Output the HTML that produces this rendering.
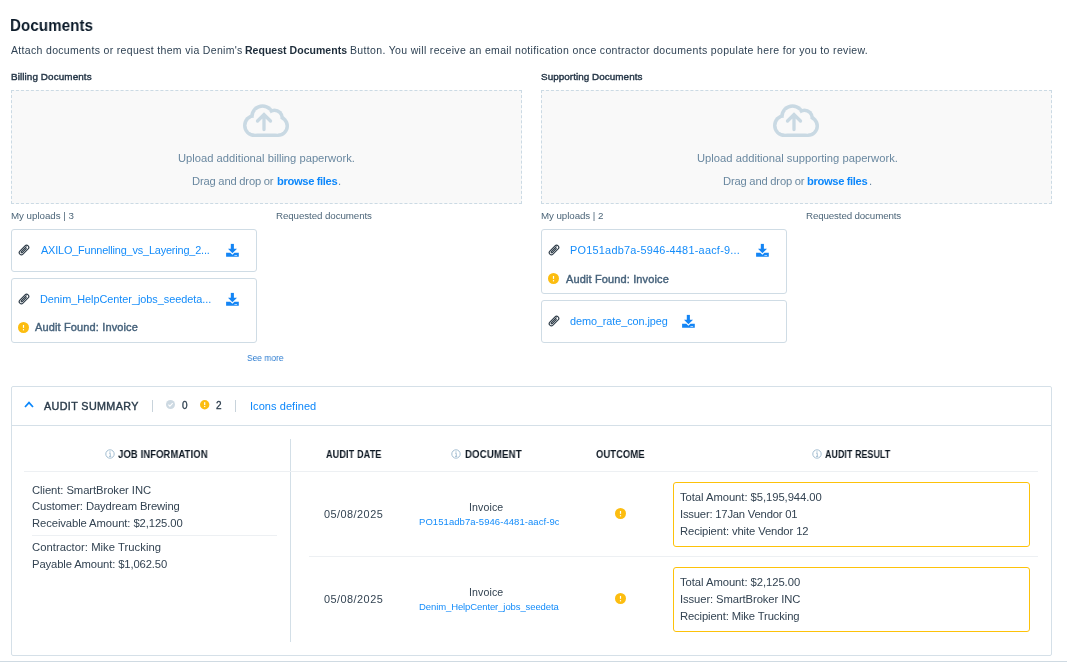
<!DOCTYPE html><html><head><meta charset="utf-8">
<style>
*{box-sizing:border-box;margin:0;padding:0}
html,body{width:1067px;height:662px;overflow:hidden;background:#fff}
body{position:relative;font-family:"Liberation Sans",sans-serif;color:#3b4d5c}
.a{position:absolute;white-space:nowrap;line-height:1;will-change:transform}
svg{position:absolute;overflow:visible}
#title{left:10px;top:17px;font-size:16.5px;font-weight:bold;color:#0b1a29}
.dsc{color:#2f4254}
#desc b{color:#1d2c3a}
.sec{font-size:9.3px;font-weight:bold;color:#243546;top:71px}
.drop{top:90px;width:511px;height:114px;background:#f9f9f9;border:1px dashed #cbdae4}
.up{font-size:11px;color:#6a88a0}
.link{color:#0c87fb;font-weight:bold}
.small{font-size:9.3px;color:#4d6679;top:211px}
.card{position:absolute;width:246px;border:1px solid #cfdce5;border-radius:3px;background:#fff}
.fname{font-size:10.5px;color:#148cfa}
.audit{font-size:10.5px;font-weight:bold;color:#45617a}
.hdr{font-size:9.7px;font-weight:bold;color:#0e1823}
.td{font-size:10.8px;color:#334352}
.hl{position:absolute;height:1px;background:#edf0f3}
.semi{font-weight:normal!important;-webkit-text-stroke:0.4px currentColor}
.semi2{font-weight:normal!important;-webkit-text-stroke:0.3px currentColor}
</style></head><body>
<div class="a" id="title" style="top: 17px; left: 10px; font-size: 16.5px; letter-spacing: 0.1px; transform-origin: 0px 0px; transform: scaleX(0.9147);">Documents</div>
<div class="a dsc" id="desc1" style="left: 11px; top: 45px; font-size: 10.5px; letter-spacing: 0.326px;">Attach documents or request them via Denim's</div>
<div class="a dsc" id="desc2" style="left: 245px; top: 45px; font-size: 10.5px; font-weight: bold; color: rgb(29, 44, 58); letter-spacing: 0.031px;">Request Documents</div>
<div class="a dsc" id="desc3" style="left: 349.5px; top: 45px; font-size: 10.5px; letter-spacing: 0.337px;">Button. You will receive an email notification once contractor documents populate here for you to review.</div>

<div class="a sec semi" id="sec1" style="top: 72px; left: 10.8px; font-size: 9.9px; letter-spacing: 0.097px;">Billing Documents</div>
<div class="a sec semi" id="sec2" style="top: 72px; left: 541px; font-size: 9.9px; letter-spacing: 0.052px;">Supporting Documents</div>

<div class="a drop" style="left:11px"></div>
<div class="a drop" style="left:541px"></div>
<svg id="cloud1" style="left:243px;top:104px" width="46" height="34" viewBox="0 0 46 34">
 <g fill="#c9d9e3"><circle cx="11.5" cy="21.5" r="11.5"></circle><circle cx="19.5" cy="12.5" r="12.25"></circle><circle cx="31.4" cy="14" r="9.6"></circle><circle cx="35" cy="22" r="11"></circle><rect x="11.5" y="21.5" width="23.5" height="11.5"></rect></g>
 <g fill="#f9f9f9"><circle cx="11.5" cy="21.5" r="8"></circle><circle cx="19.5" cy="12.5" r="8.75"></circle><circle cx="31.4" cy="14" r="6.1"></circle><circle cx="35" cy="22" r="7.5"></circle><rect x="11.5" y="13" width="23.5" height="16.5"></rect></g>
 <path d="M21 25.5 V10.5 M14.5 17 L21 10.5 L27.5 17" fill="none" stroke="#c9d9e3" stroke-width="3.3" stroke-linecap="round" stroke-linejoin="miter"></path>
</svg>
<svg id="cloud2" style="left:773px;top:104px" width="46" height="34" viewBox="0 0 46 34">
 <g fill="#c9d9e3"><circle cx="11.5" cy="21.5" r="11.5"></circle><circle cx="19.5" cy="12.5" r="12.25"></circle><circle cx="31.4" cy="14" r="9.6"></circle><circle cx="35" cy="22" r="11"></circle><rect x="11.5" y="21.5" width="23.5" height="11.5"></rect></g>
 <g fill="#f9f9f9"><circle cx="11.5" cy="21.5" r="8"></circle><circle cx="19.5" cy="12.5" r="8.75"></circle><circle cx="31.4" cy="14" r="6.1"></circle><circle cx="35" cy="22" r="7.5"></circle><rect x="11.5" y="13" width="23.5" height="16.5"></rect></g>
 <path d="M21 25.5 V10.5 M14.5 17 L21 10.5 L27.5 17" fill="none" stroke="#c9d9e3" stroke-width="3.3" stroke-linecap="round" stroke-linejoin="miter"></path>
</svg>
<div class="a up" id="up1" style="left: 178.4px; top: 153px; font-size: 11.2px; letter-spacing: 0.006px;">Upload additional billing paperwork.</div>
<div class="a up" id="dd1a" style="left: 192.4px; top: 176px; font-size: 11.2px; letter-spacing: -0.199px;">Drag and drop or</div>
<div class="a up link" id="dd1b" style="left: 277px; top: 176px; font-size: 11.2px; letter-spacing: -0.363px;">browse files</div>
<div class="a up" id="dd1c" style="left:338.3px;top:176px;font-size:11.2px">.</div>
<div class="a up" id="up2" style="left: 697px; top: 153px; font-size: 11.2px; letter-spacing: 0.017px;">Upload additional supporting paperwork.</div>
<div class="a up" id="dd2a" style="left: 722.6px; top: 176px; font-size: 11.2px; letter-spacing: -0.2px;">Drag and drop or</div>
<div class="a up link" id="dd2b" style="left: 807.2px; top: 176px; font-size: 11.2px; letter-spacing: -0.363px;">browse files</div>
<div class="a up" id="dd2c" style="left:868.5px;top:176px;font-size:11.2px">.</div>

<div class="a small" id="mu1" style="top: 211px; left: 10.8px; font-size: 9.75px; letter-spacing: -0.029px;">My uploads | 3</div>
<div class="a small" id="rd1" style="top: 211px; left: 275.8px; font-size: 9.75px; letter-spacing: -0.089px;">Requested documents</div>
<div class="a small" id="mu2" style="top: 211px; left: 540.8px; font-size: 9.75px; letter-spacing: -0.071px;">My uploads | 2</div>
<div class="a small" id="rd2" style="top: 211px; left: 806.3px; font-size: 9.75px; letter-spacing: -0.133px;">Requested documents</div>

<!-- billing cards -->
<div class="card" style="left:11px;top:229px;height:43px"></div>
<div class="card" style="left:11px;top:278px;height:65px"></div>
<div class="a fname" id="f1" style="left: 40.6px; top: 245px; font-size: 10.9px; letter-spacing: -0.175px;">AXILO_Funnelling_vs_Layering_2...</div>
<div class="a fname" id="f2" style="left: 39.6px; top: 294px; font-size: 10.9px; letter-spacing: -0.044px;">Denim_HelpCenter_jobs_seedeta...</div>
<div class="a audit semi" id="au1" style="left: 35.4px; top: 322px; font-size: 11px; letter-spacing: 0.136px;">Audit Found: Invoice</div>
<div class="a small" id="seemore" style="left: 247.4px; top: 353px; color: rgb(42, 123, 208); font-size: 9.5px; letter-spacing: 0.1px; transform-origin: 0px 0px; transform: scaleX(0.8717);">See more</div>

<!-- supporting cards -->
<div class="card" style="left:541px;top:229px;height:65px"></div>
<div class="card" style="left:541px;top:300px;height:43px"></div>
<div class="a fname" id="f3" style="left: 570px; top: 245px; font-size: 10.9px; letter-spacing: 0.241px;">PO151adb7a-5946-4481-aacf-9...</div>
<div class="a audit semi" id="au2" style="left: 565.8px; top: 274px; font-size: 11px; letter-spacing: 0.132px;">Audit Found: Invoice</div>
<div class="a fname" id="f4" style="left: 570px; top: 316px; font-size: 10.9px; letter-spacing: -0.094px;">demo_rate_con.jpeg</div>

<!-- audit summary -->
<div class="a" style="left:11px;top:386px;width:1041px;height:270px;border:1px solid #d5e0e8;border-radius:2px"></div>
<div class="a" style="left:12px;top:425px;width:1039px;height:1px;background:#d5e0e8"></div>
<svg style="left:23px;top:400px" width="12" height="9" viewBox="0 0 12 9"><path d="M2 7 L6 2.6 L10 7" fill="none" stroke="#0c87fb" stroke-width="1.7"/></svg>
<div class="a semi" id="as" style="left: 44px; top: 401px; font-size: 10.75px; font-weight: bold; color: rgb(42, 59, 74); letter-spacing: 0.382px;">AUDIT SUMMARY</div>
<div class="a" style="left:152px;top:400px;width:1px;height:12px;background:#c8d3db"></div>
<svg style="left:166px;top:400px" width="9" height="9" viewBox="0 0 9 9"><circle cx="4.5" cy="4.5" r="4.5" fill="#cdd9e2"/><path d="M2.4 4.6 L3.9 6.1 L6.7 3.1" fill="none" stroke="#fff" stroke-width="1.1"/></svg>
<div class="a semi2" id="c0" style="left:181.5px;top:401px;font-size:10px;font-weight:bold;color:#2c3e4e">0</div>
<svg style="left:200.2px;top:400.2px" width="9.4" height="9.4" viewBox="-4.7 -4.7 9.4 9.4"><circle r="4.7" fill="#fcbd10"/><rect x="-0.6" y="-2.5" width="1.2" height="2.9" fill="#fff"/><rect x="-0.6" y="1.3" width="1.2" height="1.1" fill="#fff"/></svg>
<div class="a semi2" id="c2" style="left:215.9px;top:401px;font-size:10px;font-weight:bold;color:#2c3e4e">2</div>
<div class="a" style="left:235px;top:400px;width:1px;height:12px;background:#c8d3db"></div>
<div class="a" id="icons" style="left: 250px; top: 401px; font-size: 11px; color: rgb(12, 135, 251); letter-spacing: 0.067px;">Icons defined</div>

<!-- table -->
<div class="a" style="left:290px;top:439px;width:1px;height:203px;background:#d3dfe7"></div>
<div class="hl" style="left:24px;top:471px;width:1014px"></div>
<div class="hl" style="left:32px;top:535px;width:245px"></div>
<div class="hl" style="left:309px;top:556px;width:729px"></div>

<div class="a hdr" id="h1" style="left: 118.2px; top: 450px; font-size: 10.4px; letter-spacing: 0.1px; transform-origin: 0px 0px; transform: scaleX(0.9122);">JOB INFORMATION</div>
<div class="a hdr" id="h2" style="left: 325.8px; top: 450px; font-size: 10.4px; letter-spacing: 0.1px; transform-origin: 0px 0px; transform: scaleX(0.8796);">AUDIT DATE</div>
<div class="a hdr" id="h3" style="left: 464.6px; top: 450px; font-size: 10.4px; letter-spacing: 0.1px; transform-origin: 0px 0px; transform: scaleX(0.9312);">DOCUMENT</div>
<div class="a hdr" id="h4" style="left: 595.6px; top: 450px; font-size: 10.4px; letter-spacing: 0.1px; transform-origin: 0px 0px; transform: scaleX(0.9038);">OUTCOME</div>
<div class="a hdr" id="h5" style="left: 824.8px; top: 450px; font-size: 10.4px; letter-spacing: 0.1px; transform-origin: 0px 0px; transform: scaleX(0.8519);">AUDIT RESULT</div>

<div class="a td" id="j1" style="left: 32.4px; top: 485px; font-size: 11.25px; letter-spacing: -0.072px;">Client: SmartBroker INC</div>
<div class="a td" id="j2" style="left: 32.4px; top: 501px; font-size: 11.25px; letter-spacing: -0.112px;">Customer: Daydream Brewing</div>
<div class="a td" id="j3" style="left: 32.4px; top: 518px; font-size: 11.25px; letter-spacing: -0.095px;">Receivable Amount: $2,125.00</div>
<div class="a td" id="j4" style="left: 32.4px; top: 542px; font-size: 11.25px; letter-spacing: 0.033px;">Contractor: Mike Trucking</div>
<div class="a td" id="j5" style="left: 32.4px; top: 559px; font-size: 11.25px; letter-spacing: -0.125px;">Payable Amount: $1,062.50</div>

<div class="a td" id="d1" style="left: 323.8px; top: 509px; font-size: 10.9px; letter-spacing: 0.467px;">05/08/2025</div>
<div class="a td" id="d2" style="left: 323.8px; top: 594px; font-size: 10.9px; letter-spacing: 0.467px;">05/08/2025</div>
<div class="a td" id="i1" style="left: 469.4px; top: 502px; font-size: 10.6px; letter-spacing: 0.1px;">Invoice</div>
<div class="a td" id="i2" style="left: 469.4px; top: 587px; font-size: 10.6px; letter-spacing: 0.1px;">Invoice</div>
<div class="a" id="l1" style="left: 419.4px; top: 517px; width: 139.5px; overflow: hidden; font-size: 9.5px; color: rgb(20, 140, 250); letter-spacing: 0.06px;">PO151adb7a-5946-4481-aacf-9c0</div>
<div class="a" id="l2" style="left: 419.4px; top: 602px; width: 139.5px; overflow: hidden; font-size: 9.5px; color: rgb(20, 140, 250); letter-spacing: -0.1px;">Denim_HelpCenter_jobs_seedetails</div>

<div class="a" style="left:673px;top:482px;width:357px;height:65px;border:1px solid #fdc20a;border-radius:3px"></div>
<div class="a" style="left:673px;top:567px;width:357px;height:65px;border:1px solid #fdc20a;border-radius:3px"></div>
<div class="a td" id="r1" style="left: 680.1px; top: 492px; font-size: 11.25px; letter-spacing: -0.055px;">Total Amount: $5,195,944.00</div>
<div class="a td" id="r2" style="left: 680.1px; top: 509px; font-size: 11.25px; letter-spacing: -0.201px;">Issuer: 17Jan Vendor 01</div>
<div class="a td" id="r3" style="left: 680.1px; top: 526px; font-size: 11.25px; letter-spacing: -0.112px;">Recipient: vhite Vendor 12</div>
<div class="a td" id="r4" style="left: 680.1px; top: 577px; font-size: 11.25px; letter-spacing: -0.054px;">Total Amount: $2,125.00</div>
<div class="a td" id="r5" style="left: 680.1px; top: 594px; font-size: 11.25px; letter-spacing: -0.1px;">Issuer: SmartBroker INC</div>
<div class="a td" id="r6" style="left: 680.1px; top: 611px; font-size: 11.25px; letter-spacing: -0.131px;">Recipient: Mike Trucking</div>

<div class="a" style="left:0;top:661px;width:1067px;height:1px;background:#cfdae2"></div>


<!-- icons -->
<svg style="left:16.5px;top:243.4px" width="14" height="14" viewBox="-7 -7 14 14"><g transform="rotate(-45)" fill="none" stroke="#2f3d49" stroke-width="1.1" stroke-linecap="round"><path d="M3.3 2.2 H-3.65 A2.2 2.2 0 0 1 -3.65 -2.2 H3.65 A2.2 2.2 0 0 1 3.65 2.2"/><path d="M3.9 -0.7 H-3.1 A0.7 0.7 0 0 0 -3.1 0.7 H2.6"/></g></svg>
<svg style="left:16.5px;top:292.4px" width="14" height="14" viewBox="-7 -7 14 14"><g transform="rotate(-45)" fill="none" stroke="#2f3d49" stroke-width="1.1" stroke-linecap="round"><path d="M3.3 2.2 H-3.65 A2.2 2.2 0 0 1 -3.65 -2.2 H3.65 A2.2 2.2 0 0 1 3.65 2.2"/><path d="M3.9 -0.7 H-3.1 A0.7 0.7 0 0 0 -3.1 0.7 H2.6"/></g></svg>
<svg style="left:546.5px;top:243.4px" width="14" height="14" viewBox="-7 -7 14 14"><g transform="rotate(-45)" fill="none" stroke="#2f3d49" stroke-width="1.1" stroke-linecap="round"><path d="M3.3 2.2 H-3.65 A2.2 2.2 0 0 1 -3.65 -2.2 H3.65 A2.2 2.2 0 0 1 3.65 2.2"/><path d="M3.9 -0.7 H-3.1 A0.7 0.7 0 0 0 -3.1 0.7 H2.6"/></g></svg>
<svg style="left:546.5px;top:314.4px" width="14" height="14" viewBox="-7 -7 14 14"><g transform="rotate(-45)" fill="none" stroke="#2f3d49" stroke-width="1.1" stroke-linecap="round"><path d="M3.3 2.2 H-3.65 A2.2 2.2 0 0 1 -3.65 -2.2 H3.65 A2.2 2.2 0 0 1 3.65 2.2"/><path d="M3.9 -0.7 H-3.1 A0.7 0.7 0 0 0 -3.1 0.7 H2.6"/></g></svg>
<svg style="left:225px;top:243px" width="14" height="14" viewBox="0 0 14 14"><g fill="#1485f5"><rect x="5.8" y="0.9" width="3.1" height="5.5"/><polygon points="3,5.8 12,5.8 7.4,10.2"/><path d="M1.1 9.7 H5.3 L7.4 11.8 L9.5 9.7 H13.8 V13.8 H1.1 Z"/></g><rect x="9.4" y="12.1" width="2.7" height="0.8" fill="#cfe5fb"/></svg>
<svg style="left:225px;top:292px" width="14" height="14" viewBox="0 0 14 14"><g fill="#1485f5"><rect x="5.8" y="0.9" width="3.1" height="5.5"/><polygon points="3,5.8 12,5.8 7.4,10.2"/><path d="M1.1 9.7 H5.3 L7.4 11.8 L9.5 9.7 H13.8 V13.8 H1.1 Z"/></g><rect x="9.4" y="12.1" width="2.7" height="0.8" fill="#cfe5fb"/></svg>
<svg style="left:755px;top:243px" width="14" height="14" viewBox="0 0 14 14"><g fill="#1485f5"><rect x="5.8" y="0.9" width="3.1" height="5.5"/><polygon points="3,5.8 12,5.8 7.4,10.2"/><path d="M1.1 9.7 H5.3 L7.4 11.8 L9.5 9.7 H13.8 V13.8 H1.1 Z"/></g><rect x="9.4" y="12.1" width="2.7" height="0.8" fill="#cfe5fb"/></svg>
<svg style="left:681px;top:314px" width="14" height="14" viewBox="0 0 14 14"><g fill="#1485f5"><rect x="5.8" y="0.9" width="3.1" height="5.5"/><polygon points="3,5.8 12,5.8 7.4,10.2"/><path d="M1.1 9.7 H5.3 L7.4 11.8 L9.5 9.7 H13.8 V13.8 H1.1 Z"/></g><rect x="9.4" y="12.1" width="2.7" height="0.8" fill="#cfe5fb"/></svg>
<svg style="left:18.0px;top:322.0px" width="11.0" height="11.0" viewBox="-5.5 -5.5 11.0 11.0"><circle r="5.5" fill="#fcbd10"/><rect x="-0.6" y="-2.53" width="1.2" height="2.86" fill="#fff"/><rect x="-0.6" y="1.65" width="1.2" height="1.20" fill="#fff"/></svg>
<svg style="left:548.0px;top:273.0px" width="11.0" height="11.0" viewBox="-5.5 -5.5 11.0 11.0"><circle r="5.5" fill="#fcbd10"/><rect x="-0.6" y="-2.53" width="1.2" height="2.86" fill="#fff"/><rect x="-0.6" y="1.65" width="1.2" height="1.20" fill="#fff"/></svg>
<svg style="left:615.0px;top:507.9px" width="11.0" height="11.0" viewBox="-5.5 -5.5 11.0 11.0"><circle r="5.5" fill="#fcbd10"/><rect x="-0.6" y="-2.53" width="1.2" height="2.86" fill="#fff"/><rect x="-0.6" y="1.65" width="1.2" height="1.20" fill="#fff"/></svg>
<svg style="left:615.0px;top:592.9px" width="11.0" height="11.0" viewBox="-5.5 -5.5 11.0 11.0"><circle r="5.5" fill="#fcbd10"/><rect x="-0.6" y="-2.53" width="1.2" height="2.86" fill="#fff"/><rect x="-0.6" y="1.65" width="1.2" height="1.20" fill="#fff"/></svg>
<svg style="left:105.45px;top:448.9px" width="10" height="10" viewBox="-5 -5 10 10"><circle r="4.2" fill="none" stroke="#9ab7cc" stroke-width="0.9"/><circle cx="0" cy="-2.1" r="0.62" fill="#9ab7cc"/><path d="M-0.8 -0.7 H0.3 V2.3 M-1 2.4 H1.2" fill="none" stroke="#9ab7cc" stroke-width="0.85"/></svg>
<svg style="left:451.3px;top:448.9px" width="10" height="10" viewBox="-5 -5 10 10"><circle r="4.2" fill="none" stroke="#9ab7cc" stroke-width="0.9"/><circle cx="0" cy="-2.1" r="0.62" fill="#9ab7cc"/><path d="M-0.8 -0.7 H0.3 V2.3 M-1 2.4 H1.2" fill="none" stroke="#9ab7cc" stroke-width="0.85"/></svg>
<svg style="left:811.6px;top:448.9px" width="10" height="10" viewBox="-5 -5 10 10"><circle r="4.2" fill="none" stroke="#9ab7cc" stroke-width="0.9"/><circle cx="0" cy="-2.1" r="0.62" fill="#9ab7cc"/><path d="M-0.8 -0.7 H0.3 V2.3 M-1 2.4 H1.2" fill="none" stroke="#9ab7cc" stroke-width="0.85"/></svg>
</body></html>
